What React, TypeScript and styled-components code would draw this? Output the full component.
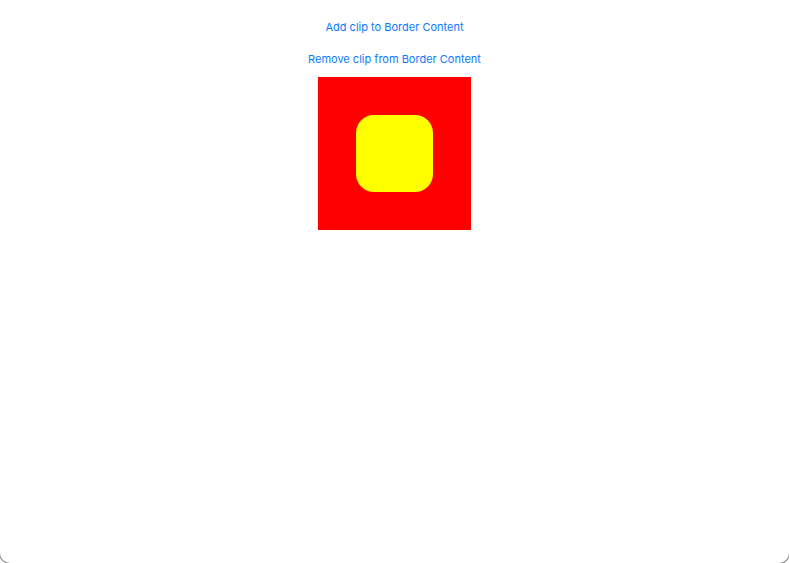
import React, { useState } from 'react';
import styled, { createGlobalStyle } from 'styled-components';

const GlobalStyle = createGlobalStyle`
  html, body {
    margin: 0;
    padding: 0;
    background: #fff;
    overflow: hidden;
  }
  body {
    font-family: Inter, "Noto Sans", "Liberation Sans", sans-serif;
  }
`;

const Frame = styled.div`
  box-sizing: border-box;
  width: 789px;
  height: 563px;
  background: #fff;
  border-bottom-left-radius: 10px;
  border-bottom-right-radius: 10px;
  box-shadow: 0 0 0 1px rgba(0, 0, 0, 0.45);
  display: flex;
  flex-direction: column;
  align-items: center;
  padding-top: 19px;
`;

const LinkButton = styled.button`
  border: none;
  background: none;
  padding: 0;
  height: 16px;
  margin-bottom: 16px;
  font-family: inherit;
  font-size: 11px;
  line-height: 16px;
  color: #0a7aff;
  cursor: pointer;
`;

const BorderBox = styled.div<{ clipped: boolean }>`
  margin-top: -6px;
  width: 153px;
  height: 153px;
  background: #ff0000;
  display: flex;
  align-items: center;
  justify-content: center;
  overflow: ${({ clipped }) => (clipped ? 'hidden' : 'visible')};
`;

const Content = styled.div`
  width: 77px;
  height: 77px;
  background: #ffff00;
  border-radius: 18px;
`;

const App = () => {
  const [clipped, setClipped] = useState(false);

  return (
    <>
      <GlobalStyle />
      <Frame>
        <LinkButton onClick={() => setClipped(true)}>Add clip to Border Content</LinkButton>
        <LinkButton onClick={() => setClipped(false)}>Remove clip from Border Content</LinkButton>
        <BorderBox clipped={clipped}>
          <Content />
        </BorderBox>
      </Frame>
    </>
  );
};

export default App;
